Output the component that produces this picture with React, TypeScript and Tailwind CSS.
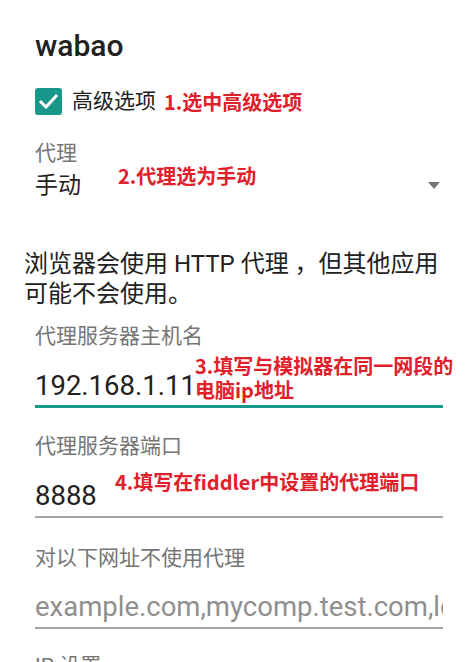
import React from "react";

const red =
  "font-['Noto_Sans_CJK_SC',sans-serif] font-bold text-[20px] text-[#e0202a] whitespace-nowrap";

const ProxyForm: React.FC = () => {
  return (
    <div className="w-[472px] h-[662px] overflow-hidden bg-white text-[#212121] font-[Roboto,'Noto_Sans_CJK_SC',sans-serif]">
      <div className="pl-[35px] pr-[29px] pt-[31px]">
        <h1 className="text-[30px] leading-[30px] font-medium">wabao</h1>

        {/* advanced options */}
        <div className="mt-[27px] flex items-center h-[27px]">
          <div className="w-[27px] h-[27px] rounded-[3px] bg-[#17968a] shrink-0 flex items-center justify-center">
            <svg width="27" height="27" viewBox="0 0 27 27">
              <path
                d="M6 14 L11 19 L21 8"
                fill="none"
                stroke="#ffffff"
                strokeWidth="3"
                strokeLinecap="square"
              />
            </svg>
          </div>
          <span className="ml-[10px] text-[21px] leading-[21px]">高级选项</span>
          <span className={`ml-[8px] leading-[20px] ${red}`}>1.选中高级选项</span>
        </div>

        {/* proxy spinner */}
        <div className="relative mt-[28px]">
          <div className="text-[21px] leading-[21px] text-[#757575]">代理</div>
          <div className="mt-[10px] h-[23px] flex items-center justify-between">
            <span className="text-[23px] leading-[23px]">手动</span>
            <svg width="12" height="7" viewBox="0 0 12 7" className="mr-[3px]">
              <polygon points="0,0 12,0 6,7" fill="#757575" />
            </svg>
          </div>
          <div className={`absolute left-[83px] top-[23px] leading-[20px] ${red}`}>
            2.代理选为手动
          </div>
        </div>
      </div>

      <p className="mt-[52px] px-[24px] text-[24px] leading-[30px]">
        浏览器会使用 HTTP 代理 ，但其他应用
        <br />
        可能不会使用。
      </p>

      <div className="pl-[35px] pr-[29px]">
        <div className="mt-[17px] text-[21px] leading-[21px] text-[#757575]">
          代理服务器主机名
        </div>
        <div className="relative mt-[25px] pb-[6px] border-b-[3px] border-[#17968a]">
          <span className="text-[27.5px] leading-[27px] block">192.168.1.11</span>
          <div className={`absolute left-[160px] top-[-18px] leading-[24px] ${red}`}>
            3.填写与模拟器在同一网段的
            <br />
            电脑ip地址
          </div>
        </div>

        <div className="mt-[28px] text-[21px] leading-[21px] text-[#757575]">
          代理服务器端口
        </div>
        <div className="relative mt-[25px] pb-[7px] border-b-2 border-[#a3a3a3]">
          <span className="text-[27.5px] leading-[27px] block">8888</span>
          <div className={`absolute left-[80px] top-[-10px] leading-[20px] ${red}`}>
            4.填写在fiddler中设置的代理端口
          </div>
        </div>

        <div className="mt-[30px] text-[21px] leading-[21px] text-[#757575]">
          对以下网址不使用代理
        </div>
        <div className="mt-[24px] pb-[7px] border-b-2 border-[#a3a3a3] overflow-hidden whitespace-nowrap">
          <span className="text-[27.5px] leading-[27px] block text-[#8f8f8f]">
            example.com,mycomp.test.com,localhost
          </span>
        </div>

        <div className="mt-[27px] text-[21px] leading-[21px] text-[#757575]">IP 设置</div>
      </div>
    </div>
  );
};

export default function App() {
  return <ProxyForm />;
}
